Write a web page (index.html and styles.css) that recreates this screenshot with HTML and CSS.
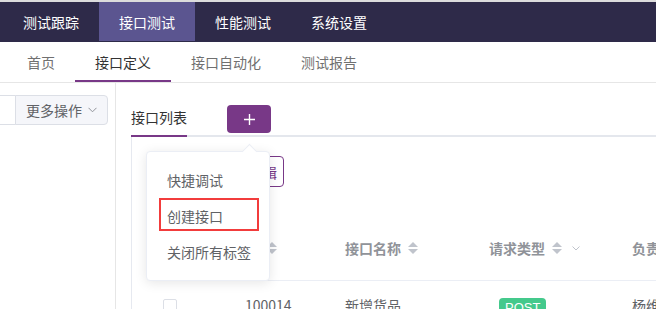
FILE: index.html
```html
<!DOCTYPE html>
<html lang="zh-CN">
<head>
    <meta charset="UTF-8">
    <title>接口定义</title>
    <link rel="stylesheet" href="styles.css">
</head>
<body>
    <div class="topline"></div>
    <div class="header">
        <div class="header-item">测试跟踪</div>
        <div class="header-item active">接口测试</div>
        <div class="header-item">性能测试</div>
        <div class="header-item">系统设置</div>
    </div>
    <div class="subnav">
        <div class="subnav-item">首页</div>
        <div class="subnav-item active">接口定义</div>
        <div class="subnav-item">接口自动化</div>
        <div class="subnav-item">测试报告</div>
    </div>
    <div class="main">
        <div class="aside">
            <div class="btn-group">
                <button class="btn-light first">新建</button>
                <button class="btn-light">更多操作
                    <svg width="9" height="6" viewBox="0 0 9 6"><path d="M0.5 0.8 L4.5 4.8 L8.5 0.8" fill="none" stroke="#909399" stroke-width="1"/></svg>
                </button>
            </div>
        </div>
        <div class="content">
            <div class="tabs">
                <div class="tab active">接口列表</div>
                <button class="btn-add">
                    <svg width="11" height="11" viewBox="0 0 11 11"><path d="M5.5 0 V11 M0 5.5 H11" stroke="#fff" stroke-width="1.4"/></svg>
                </button>
            </div>
            <div class="panel">
                <div class="toolbar">
                    <button class="btn-plain">批量编辑</button>
                </div>
                <div class="table">
                    <div class="cell head sel"><span class="checkbox"></span></div>
                    <div class="cell head line"></div>
                    <div class="cell head line">ID <span class="sort"></span></div>
                    <div class="cell head line">接口名称 <span class="sort"></span></div>
                    <div class="cell head line">请求类型 <span class="sort"></span>
                        <svg class="filter" width="8" height="5" viewBox="0 0 8 5"><path d="M0.5 0.5 L4 4 L7.5 0.5" fill="none" stroke="#c0c4cc" stroke-width="1"/></svg>
                    </div>
                    <div class="cell head line owner">负责人</div>

                    <div class="cell sel"><span class="checkbox"></span></div>
                    <div class="cell"></div>
                    <div class="cell">100014</div>
                    <div class="cell">新增货品</div>
                    <div class="cell"><span class="tag-post">POST</span></div>
                    <div class="cell owner">杨维</div>
                </div>
            </div>

            <div class="popover">
                <div class="popover-arrow"></div>
                <div class="popover-item">快捷调试</div>
                <div class="popover-item marked">创建接口</div>
                <div class="popover-item">关闭所有标签</div>
            </div>
        </div>
    </div>
</body>
</html>
```

FILE: styles.css
```css
body {
    margin: 0;
    height: 309px;
    overflow: hidden;
    font-family: "Noto Sans CJK SC", "Liberation Sans", sans-serif;
    font-size: 14px;
    color: #606266;
    background-color: #FFFFFF;
}
button {
    font-family: inherit;
    font-size: 14px;
    cursor: pointer;
}
.topline {
    height: 2px;
    background-color: #dcdcdc;
}
.header {
    display: flex;
    align-items: flex-start;
    height: 40px;
    padding-left: 3px;
    background-color: #2e2a49;
}
.header-item {
    height: 39px;
    padding: 1px 20px 0 20px;
    line-height: 39px;
    color: #FFFFFF;
    box-sizing: border-box;
}
.header-item.active {
    background-color: #5b5590;
}
.subnav {
    display: flex;
    height: 40px;
    padding-left: 7px;
    border-bottom: 1px solid #e6e6e6;
}
.subnav-item {
    height: 40px;
    padding: 0 20px;
    line-height: 40px;
    color: #707070;
    box-sizing: border-box;
}
.subnav-item.active {
    color: #333333;
    border-bottom: 2px solid #783887;
}
.main {
    display: flex;
    height: 226px;
}
.aside {
    width: 116px;
    flex-shrink: 0;
    padding-top: 12px;
    border-right: 1px solid #e6e6e6;
    overflow: hidden;
    box-sizing: border-box;
}
.btn-group {
    display: flex;
    margin-left: -44px;
}
.btn-light {
    display: flex;
    align-items: center;
    gap: 6px;
    height: 30px;
    padding: 0 10px;
    border: 1px solid #dcdfe6;
    border-radius: 0 4px 4px 0;
    background-color: #f5f6fa;
    color: #606266;
    white-space: nowrap;
}
.btn-light.first {
    width: 60px;
    margin-right: -1px;
    border-radius: 4px 0 0 4px;
    color: #a0c8f0;
    background-color: #FFFFFF;
}
.content {
    position: relative;
    flex: 1;
    padding: 14px 0 0 15px;
    overflow: hidden;
}
.tabs {
    display: flex;
    align-items: flex-start;
    height: 40px;
    box-shadow: inset 0 -2px 0 #e4e7ed;
}
.tab {
    height: 40px;
    padding-top: 2px;
    line-height: 36px;
    color: #333333;
    box-sizing: border-box;
}
.tab.active {
    border-bottom: 2px solid #783887;
}
.btn-add {
    display: flex;
    align-items: center;
    justify-content: center;
    width: 44px;
    height: 28px;
    margin: 8px 0 0 40px;
    padding: 0;
    border: none;
    border-radius: 4px;
    background-color: #783887;
}
.panel {
    height: 200px;
    padding-top: 19px;
    border-left: 1px solid #e6e9f0;
    box-sizing: border-box;
}
.toolbar {
    display: flex;
    padding-left: 73px;
}
.btn-plain {
    height: 31px;
    padding: 0 6px 0 15px;
    border: 1px solid #783887;
    border-radius: 4px;
    background-color: #FFFFFF;
    color: #783887;
    white-space: nowrap;
}
.table {
    display: grid;
    grid-template-columns: 72px 30px 100px 144px 144px 1fr;
    margin-top: 37px;
}
.cell {
    display: flex;
    align-items: flex-start;
    padding: 14px 0 0 11px;
    line-height: 20px;
    white-space: nowrap;
    box-sizing: border-box;
}
.cell.head {
    height: 57px;
    font-weight: bold;
    color: #909399;
}
.cell.head.line {
    border-bottom: 1px solid #ebeef5;
}
.cell.sel {
    padding-left: 31px;
}
.cell.owner {
    padding-left: 10px;
}
.checkbox {
    width: 14px;
    height: 14px;
    margin-top: 4px;
    border: 1px solid #dcdfe6;
    border-radius: 2px;
    box-sizing: border-box;
}
.sort {
    position: relative;
    width: 10px;
    height: 20px;
    margin-left: 7px;
}
.sort::before, .sort::after {
    content: '';
    position: absolute;
    left: 0;
    border-left: 5px solid transparent;
    border-right: 5px solid transparent;
}
.sort::before {
    top: 4px;
    border-bottom: 5px solid #c0c4cc;
}
.sort::after {
    top: 11px;
    border-top: 5px solid #c0c4cc;
}
.filter {
    margin: 8px 0 0 10px;
}
.tag-post {
    height: 20px;
    margin: 3px 0 0 10px;
    padding: 0 6px;
    line-height: 20px;
    border-radius: 4px;
    font-family: "Liberation Sans", sans-serif;
    font-size: 13px;
    color: #FFFFFF;
    background-color: #44c98c;
}
.popover {
    position: absolute;
    left: 30px;
    top: 68px;
    width: 124px;
    padding: 10px 0;
    background-color: #FFFFFF;
    border: 1px solid #ebeef5;
    border-radius: 4px;
    box-shadow: 0 2px 12px rgba(0, 0, 0, 0.1);
    box-sizing: border-box;
}
.popover-arrow {
    position: absolute;
    top: -6px;
    left: 97px;
    width: 10px;
    height: 10px;
    background-color: #FFFFFF;
    border-top: 1px solid #ebeef5;
    border-left: 1px solid #ebeef5;
    transform: rotate(45deg);
}
.popover-item {
    position: relative;
    height: 36px;
    padding-left: 20px;
    line-height: 36px;
    color: #606266;
}
.popover-item.marked::after {
    content: '';
    position: absolute;
    left: 12px;
    right: 10px;
    top: 0;
    bottom: 3px;
    border: 2px solid #f23c3c;
}
```
